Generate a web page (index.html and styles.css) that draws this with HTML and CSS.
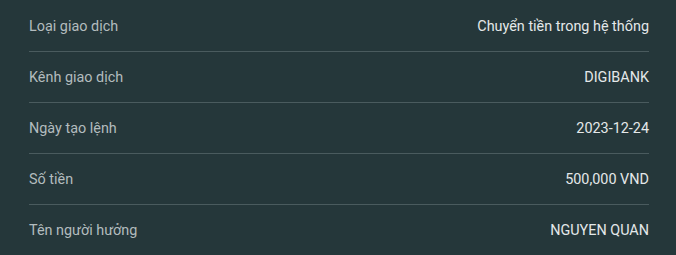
FILE: index.html
```html
<!DOCTYPE html>
<html lang="vi">
<head>
<meta charset="utf-8">
<link rel="stylesheet" href="styles.css">
</head>
<body>
<div class="list">
  <div class="row"><span class="label">Loại giao dịch</span><span class="value">Chuyển tiền trong hệ thống</span></div>
  <div class="row"><span class="label">Kênh giao dịch</span><span class="value">DIGIBANK</span></div>
  <div class="row"><span class="label">Ngày tạo lệnh</span><span class="value">2023-12-24</span></div>
  <div class="row"><span class="label">Số tiền</span><span class="value">500,000 VND</span></div>
  <div class="row"><span class="label">Tên người hưởng</span><span class="value">NGUYEN QUAN</span></div>
</div>
</body>
</html>
```
FILE: styles.css
```css
html, body {
  margin: 0;
  padding: 0;
  background: #25373a;
}
body {
  font-family: Roboto, "Noto Sans", sans-serif;
  font-size: 14.4px;
  width: 676px;
  height: 255px;
  overflow: hidden;
}
.list {
  padding: 1px 27px 0 29px;
}
.row {
  display: flex;
  justify-content: space-between;
  align-items: center;
  height: 50px;
  border-bottom: 1px solid #4a5b5e;
}
.label {
  color: #b3bcbe;
}
.value {
  color: #e4e8e9;
}
```
